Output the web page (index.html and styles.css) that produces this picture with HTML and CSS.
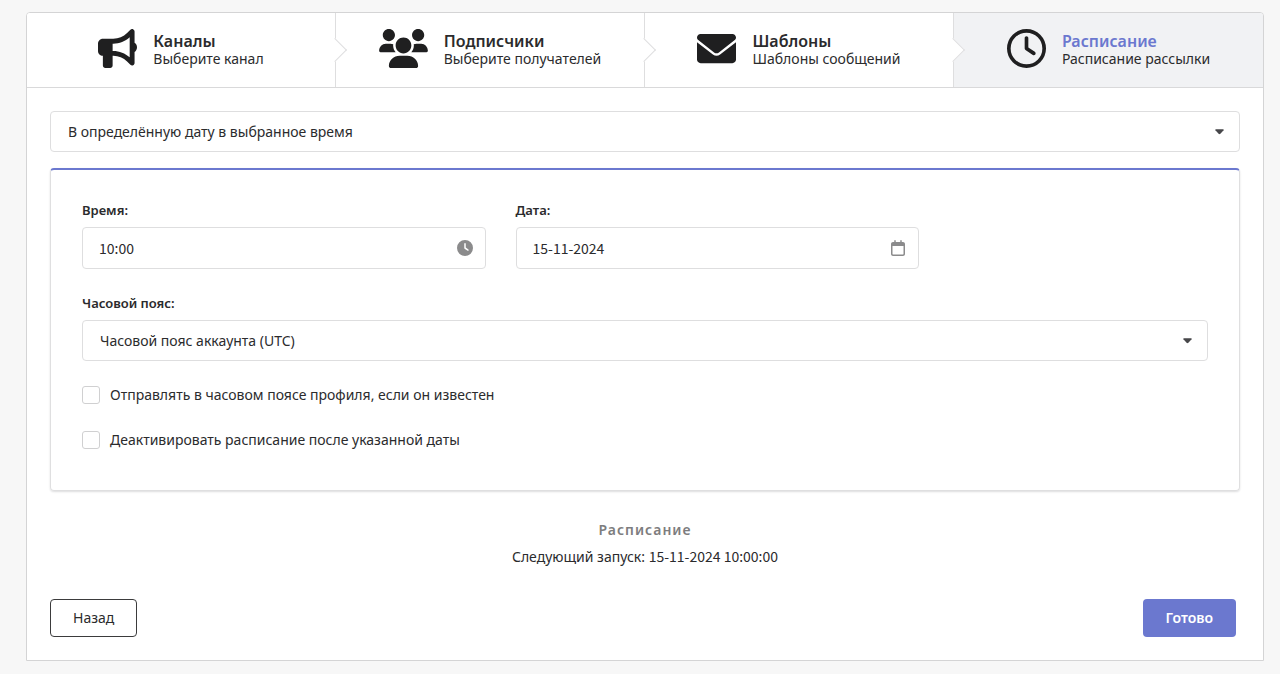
FILE: index.html
```html
<!DOCTYPE html>
<html lang="ru">
<head>
<meta charset="utf-8">
<meta name="viewport" content="width=device-width, initial-scale=1">
<title>Расписание рассылки</title>
<link rel="stylesheet" href="styles.css">
</head>
<body>
<main class="wizard">
  <nav class="steps" aria-label="Шаги">
    <a class="step" href="#channels">
      <svg class="step-icon" viewBox="0 0 512 512" aria-hidden="true"><path d="M480 32c0-12.9-7.8-24.6-19.8-29.6s-25.7-2.2-34.9 6.9L381.7 53c-48 48-113.1 75-181 75H192 160 64c-35.3 0-64 28.7-64 64v96c0 35.3 28.7 64 64 64l0 128c0 17.7 14.3 32 32 32h64c17.7 0 32-14.3 32-32V352l8.7 0c67.9 0 133 27 181 75l43.6 43.6c9.2 9.2 22.9 11.9 34.9 6.9s19.8-16.6 19.8-29.6V300.4c18.6-8.8 32-32.5 32-60.4s-13.4-51.6-32-60.4V32zm-64 76.7V240 371.3C357.2 317.8 280.5 288 200.7 288H192V192h8.7c79.8 0 156.5-29.8 215.3-83.3z"/></svg>
      <span class="step-text"><span class="step-title">Каналы</span><span class="step-note">Выберите канал</span></span>
    </a>
    <a class="step" href="#subscribers">
      <svg class="step-icon step-icon-wide" viewBox="0 0 640 512" aria-hidden="true"><path d="M319.9 320c57.41 0 103.1-46.56 103.1-104c0-57.44-46.54-104-103.1-104c-57.41 0-103.1 46.56-103.1 104C215.9 273.4 262.5 320 319.9 320zM369.9 352H270.1C191.6 352 128 411.7 128 485.3C128 500.1 140.7 512 156.4 512h327.2C499.3 512 512 500.1 512 485.3C512 411.7 448.4 352 369.9 352zM512 160c44.18 0 80-35.82 80-80S556.2 0 512 0c-44.18 0-80 35.82-80 80S467.8 160 512 160zM183.9 216c0-5.449 .9824-10.63 1.609-15.91C174.6 194.1 162.6 192 149.9 192H88.08C39.44 192 0 233.8 0 285.3C0 295.6 7.887 304 17.62 304h199.5C196.7 280.2 183.9 249.7 183.9 216zM128 160c44.18 0 80-35.82 80-80S172.2 0 128 0C83.82 0 48 35.82 48 80S83.82 160 128 160zM551.9 192h-61.84c-12.8 0-24.88 3.037-35.86 8.24C454.8 205.5 455.8 210.6 455.8 216c0 33.71-12.78 64.21-33.16 88h199.7C632.1 304 640 295.6 640 285.3C640 233.8 600.6 192 551.9 192z"/></svg>
      <span class="step-text"><span class="step-title">Подписчики</span><span class="step-note">Выберите получателей</span></span>
    </a>
    <a class="step" href="#templates">
      <svg class="step-icon" viewBox="0 0 512 512" aria-hidden="true"><path d="M256 352c-16.53 0-33.06-5.422-47.16-16.41L0 173.2V400C0 426.5 21.49 448 48 448h416c26.51 0 48-21.49 48-48V173.2l-208.8 162.5C289.1 346.6 272.5 352 256 352zM16.29 145.3l212.2 165.1c16.19 12.6 38.87 12.6 55.06 0l212.2-165.1C505.1 137.3 512 125 512 112C512 85.49 490.5 64 464 64h-416C21.49 64 0 85.49 0 112C0 125 6.01 137.3 16.29 145.3z"/></svg>
      <span class="step-text"><span class="step-title">Шаблоны</span><span class="step-note">Шаблоны сообщений</span></span>
    </a>
    <a class="step step-active" href="#schedule" aria-current="step">
      <svg class="step-icon" viewBox="0 0 512 512" aria-hidden="true"><path d="M464 256A208 208 0 1 1 48 256a208 208 0 1 1 416 0zM0 256a256 256 0 1 0 512 0A256 256 0 1 0 0 256zM232 120V256c0 8 4 15.5 10.7 20l96 64c11 7.4 25.9 4.4 33.3-6.7s4.4-25.9-6.7-33.3L280 243.2V120c0-13.3-10.7-24-24-24s-24 10.7-24 24z"/></svg>
      <span class="step-text"><span class="step-title">Расписание</span><span class="step-note">Расписание рассылки</span></span>
    </a>
  </nav>

  <form class="content">
    <div class="control">
      <select class="input select" aria-label="Тип расписания">
        <option>В определённую дату в выбранное время</option>
      </select>
      <svg class="caret" viewBox="0 0 10 6" aria-hidden="true"><path d="M1 0h8q1 0 .5 1L6 5Q5 6 4 5L.5 1Q0 0 1 0z"/></svg>
    </div>

    <section class="panel">
      <div class="row">
        <div class="field">
          <label class="label" for="time">Время:</label>
          <div class="control">
            <input class="input numeric" id="time" type="text" value="10:00">
            <svg class="input-icon" viewBox="0 0 512 512" aria-hidden="true"><path d="M256 0a256 256 0 1 1 0 512A256 256 0 1 1 256 0zM232 120V256c0 8 4 15.5 10.7 20l96 64c11 7.4 25.9 4.4 33.3-6.7s4.4-25.9-6.7-33.3L280 243.2V120c0-13.3-10.7-24-24-24s-24 10.7-24 24z"/></svg>
          </div>
        </div>
        <div class="field">
          <label class="label" for="date">Дата:</label>
          <div class="control">
            <input class="input numeric" id="date" type="text" value="15-11-2024">
            <svg class="input-icon" viewBox="-32 0 512 512" aria-hidden="true"><path d="M152 64H296V24C296 10.75 306.7 0 320 0C333.3 0 344 10.75 344 24V64H384C419.3 64 448 92.65 448 128V448C448 483.3 419.3 512 384 512H64C28.65 512 0 483.3 0 448V128C0 92.65 28.65 64 64 64H104V24C104 10.75 114.7 0 128 0C141.3 0 152 10.75 152 24V64zM48 448C48 456.8 55.16 464 64 464H384C392.8 464 400 456.8 400 448V192H48V448z"/></svg>
          </div>
        </div>
      </div>
      <div class="field">
        <label class="label" for="zone">Часовой пояс:</label>
        <div class="control">
          <select class="input select" id="zone">
            <option>Часовой пояс аккаунта (UTC)</option>
          </select>
          <svg class="caret" viewBox="0 0 10 6" aria-hidden="true"><path d="M1 0h8q1 0 .5 1L6 5Q5 6 4 5L.5 1Q0 0 1 0z"/></svg>
        </div>
      </div>
      <div class="checks">
        <label class="check"><input class="box" type="checkbox">Отправлять в часовом поясе профиля, если он известен</label>
        <label class="check"><input class="box" type="checkbox">Деактивировать расписание после указанной даты</label>
      </div>
    </section>

    <section class="summary">
      <h2 class="summary-title">Расписание</h2>
      <p class="summary-text">Следующий запуск: <time class="numeric" datetime="2024-11-15T10:00:00">15-11-2024 10:00:00</time></p>
    </section>

    <div class="actions">
      <button class="button button-outline" type="button">Назад</button>
      <button class="button button-primary" type="submit">Готово</button>
    </div>
  </form>
</main>
</body>
</html>
```
FILE: styles.css
```css
* {
  box-sizing: border-box;
}

body {
  margin: 0;
  padding: 12px 16px 12px 26px;
  background: #f7f7f7;
  color: #2b2b2d;
  font: 14px/20px "Noto Sans", "Noto Sans CJK SC", sans-serif;
}

.wizard {
  background: #fff;
  border: 1px solid #d4d4d5;
  border-radius: 4px 4px 0 0;
}

.steps {
  display: grid;
  grid-template-columns: repeat(4, 1fr);
  border-bottom: 1px solid #d9d9da;
}

.step {
  position: relative;
  display: flex;
  align-items: flex-start;
  justify-content: center;
  gap: 16px;
  padding: 16px 20px 19px;
  background: #fff;
  border-right: 1px solid #dededf;
  color: #2b2b2d;
  text-decoration: none;
}

.step:first-child {
  border-top-left-radius: 3px;
}

.step:last-child {
  border-right: 0;
  border-top-right-radius: 3px;
}

.step:not(:last-child)::after {
  content: "";
  position: absolute;
  z-index: 1;
  top: 50%;
  right: 0;
  width: 16px;
  height: 16px;
  background: #fff;
  border: solid #dededf;
  border-width: 0 1px 1px 0;
  transform: translate(50%, -50%) rotate(-45deg);
}

.step-active {
  background: #f1f2f4;
}

.step-icon {
  flex: none;
  width: 39px;
  height: 39px;
  fill: #1f1f20;
}

.step-icon-wide {
  width: 49px;
}

.step-text {
  display: flex;
  flex-direction: column;
  padding-top: 3px;
  line-height: 18px;
}

.step-title {
  font-size: 16px;
  font-weight: 600;
}

.step-active .step-title {
  color: #6b78cf;
}

.content {
  padding: 23px;
}

.control {
  position: relative;
}

.input {
  display: block;
  width: 100%;
  height: 42px;
  padding: 0 48px 0 16px;
  border: 1px solid #dededf;
  border-radius: 4px;
  background: #fff;
  color: inherit;
  font: inherit;
}

.select {
  appearance: none;
  height: 41px;
  padding-left: 17px;
}

.numeric {
  font-family: "Noto Sans CJK SC", "Noto Sans", sans-serif;
}

.caret {
  position: absolute;
  top: 18px;
  right: 16px;
  width: 9px;
  height: 6px;
  fill: #47474a;
}

.input-icon {
  position: absolute;
  top: 13px;
  right: 13px;
  width: 16px;
  height: 16px;
  fill: #8b8b8c;
}

.panel {
  display: flex;
  flex-direction: column;
  gap: 24px;
  margin-top: 16px;
  padding: 30px 31px 40px;
  border: 1px solid #dfdfe0;
  border-top: 2px solid #6b78cf;
  border-radius: 4px;
  box-shadow: 0 1px 2px rgba(34, 36, 38, 0.15);
}

.row {
  display: grid;
  grid-template-columns: repeat(8, 1fr);
  gap: 30px;
}

.row .field {
  grid-column: span 3;
}

.label {
  display: block;
  margin-bottom: 7px;
  font-size: 13px;
  font-weight: 600;
}

.checks {
  display: flex;
  flex-direction: column;
  gap: 25px;
}

.check {
  display: flex;
  align-items: center;
  gap: 10px;
}

.box {
  appearance: none;
  flex: none;
  width: 18px;
  height: 18px;
  margin: 0;
  border: 1px solid #d0d0d1;
  border-radius: 3px;
  background: #fff;
}

.box:checked {
  background: #6b78cf;
}

.summary {
  margin-top: 29px;
  text-align: center;
}

.summary-title {
  margin: 0 0 6px;
  color: #7d7d7e;
  font-size: 14px;
  font-weight: 600;
  line-height: 20px;
  letter-spacing: 1px;
}

.summary-text {
  margin: 0;
}

.actions {
  display: flex;
  justify-content: space-between;
  margin-top: 32px;
  padding-right: 4px;
}

.button {
  height: 38px;
  padding: 0 22px;
  border: 0;
  border-radius: 4px;
  font: inherit;
}

.button-outline {
  border: 1px solid #3b3b3c;
  background: #fff;
  color: #2b2b2d;
}

.button-primary {
  padding: 0 23px;
  background: #6b78cf;
  color: #fff;
  font-weight: 600;
}
```
